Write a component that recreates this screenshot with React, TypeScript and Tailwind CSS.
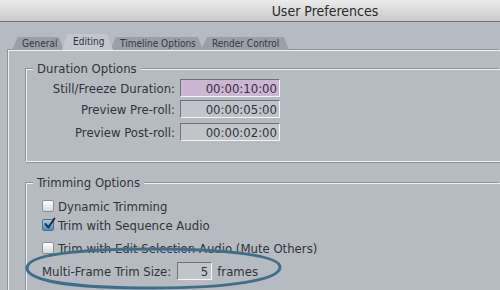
import React from "react";

const font = { fontFamily: '"DejaVu Sans Condensed","DejaVu Sans","Liberation Sans",sans-serif' };

function Tab({ label, w, selected, textPad }: { label: string; w: number; selected?: boolean; textPad: number }) {
  return (
    <div
      className={
        "relative flex items-center whitespace-nowrap " +
        (selected
          ? "z-10 h-[16px] bg-[#c3c7cc] text-[#2f3338] [clip-path:polygon(0_100%,5px_0,calc(100%-6px)_0,100%_100%)]"
          : "h-[13px] bg-[#98a0a8] text-[#353a40] [clip-path:polygon(0_100%,6px_0,calc(100%-5px)_0,100%_100%)]")
      }
      style={{ width: w, paddingLeft: textPad }}
    >
      <span className="text-[10px] leading-none">{label}</span>
    </div>
  );
}

function TimeField({ value, hl }: { value: string; hl?: boolean }) {
  return (
    <div
      className={
        "flex h-[18px] w-[100px] items-center justify-end border border-t-[#6e737a] border-l-[#6e737a] border-b-[#f3f4f6] border-r-[#f3f4f6] pr-[2px] text-[13px] leading-none " +
        (hl ? "bg-[#cdb5d5] text-[#3a2f40]" : "bg-[#c1c5ca] text-[#30343a]")
      }
    >
      {value}
    </div>
  );
}

function Check({ checked }: { checked?: boolean }) {
  return (
    <div
      className={
        "relative flex h-[12px] w-[12px] shrink-0 items-center justify-center rounded-[2px] border " +
        (checked
          ? "border-[#4d6f8e] bg-gradient-to-b from-[#a9cbe8] to-[#4b8ac0]"
          : "border-[#8a8f96] bg-gradient-to-b from-[#ffffff] to-[#d4d7db]")
      }
    >
      {checked && (
        <svg width="13" height="13" viewBox="0 0 13 13" className="absolute -top-[3px] left-[0px]">
          <path d="M2.5 7 L5.3 10.5 L11.5 1.5" fill="none" stroke="#1d2c3c" strokeWidth="2" strokeLinecap="round" strokeLinejoin="round" />
        </svg>
      )}
    </div>
  );
}

export default function App() {
  return (
    <div className="relative h-[290px] w-[500px] overflow-hidden bg-[#b6bbc1] text-[#30343a]" style={font}>
      {/* Title bar */}
      <div className="flex h-[22px] items-center justify-center border-b border-[#6f7378] bg-gradient-to-b from-[#ececec] to-[#c9c9c9] pl-[150px]">
        <span className="text-[14px] leading-none text-[#2a2a2a]">User Preferences</span>
      </div>

      {/* Tabs */}
      <div className="mt-[12px] flex h-[16px] items-end pl-[12px]">
        <Tab label="General" w={52} textPad={10} />
        <div className="-ml-[2px]">
          <Tab label="Editing" w={51} textPad={11} selected />
        </div>
        <div className="-ml-[3px]">
          <Tab label="Timeline Options" w={93} textPad={10} />
        </div>
        <div className="-ml-[2px]">
          <Tab label="Render Control" w={88} textPad={11} />
        </div>
      </div>

      {/* Panel */}
      <div className="ml-[8px] h-[300px] border-l border-t border-l-[#eef0f2] border-t-[#eef0f2] shadow-[-1px_-1px_0_#8d939a] pl-[17px] pt-[18px]">
        {/* Duration Options */}
        <div className="relative h-[93px] border-b border-l border-t border-[#eef0f2] shadow-[-1px_-1px_0_#8d939a,0_1px_0_#8d939a] pt-[9px]">
          <div className="absolute -top-[8px] left-[6px] bg-[#b6bbc1] px-[4px] text-[13px] leading-[14px]">Duration Options</div>
          <div className="grid grid-cols-[148px_100px] items-center gap-x-[5px]">
            <div className="text-right text-[13px] leading-none">Still/Freeze Duration:</div>
            <TimeField value="00:00:10:00" hl />
          </div>
          <div className="mt-[3px] grid grid-cols-[148px_100px] items-center gap-x-[5px]">
            <div className="text-right text-[13px] leading-none">Preview Pre-roll:</div>
            <TimeField value="00:00:05:00" />
          </div>
          <div className="mt-[5px] grid grid-cols-[148px_100px] items-center gap-x-[5px]">
            <div className="text-right text-[13px] leading-none">Preview Post-roll:</div>
            <TimeField value="00:00:02:00" />
          </div>
        </div>

        {/* Trimming Options */}
        <div className="relative mt-[21px] h-[200px] border-l border-t border-[#eef0f2] shadow-[-1px_-1px_0_#8d939a] pl-[15px] pt-[15px]">
          <div className="absolute -top-[8px] left-[6px] bg-[#b6bbc1] px-[4px] text-[13px] leading-[14px]">Trimming Options</div>
          <div className="flex h-[14px] items-center gap-[4px]">
            <Check />
            <span className="text-[13px] leading-none">Dynamic Trimming</span>
          </div>
          <div className="mt-[5px] flex h-[14px] items-center gap-[4px]">
            <Check checked />
            <span className="text-[13px] leading-none">Trim with Sequence Audio</span>
          </div>
          <div className="mt-[9px] flex h-[14px] items-center gap-[4px]">
            <Check />
            <span className="text-[13px] leading-none">Trim with Edit Selection Audio (Mute Others)</span>
          </div>
          <div className="mt-[7px] flex h-[18px] items-center">
            <span className="text-[13px] leading-none">Multi-Frame Trim Size:</span>
            <div className="ml-[6px] flex h-[18px] w-[35px] items-center justify-end border border-t-[#6e737a] border-l-[#6e737a] border-b-[#f3f4f6] border-r-[#f3f4f6] bg-[#c1c5ca] pr-[3px] text-[13px] leading-none">
              5
            </div>
            <span className="ml-[5px] text-[13px] leading-none">frames</span>
          </div>
        </div>
      </div>

      {/* Highlight ellipse */}
      <svg className="pointer-events-none absolute left-0 top-0" width="500" height="290" viewBox="0 0 500 290">
        <path
          d="M27 268 C 27 254, 80 249, 153 249 C 230 249, 280 256, 280 267 C 280 280, 230 288, 153 288 C 80 288, 27 282, 27 268 Z"
          fill="none"
          stroke="#3f6e8b"
          strokeWidth="3"
        />
      </svg>
    </div>
  );
}
